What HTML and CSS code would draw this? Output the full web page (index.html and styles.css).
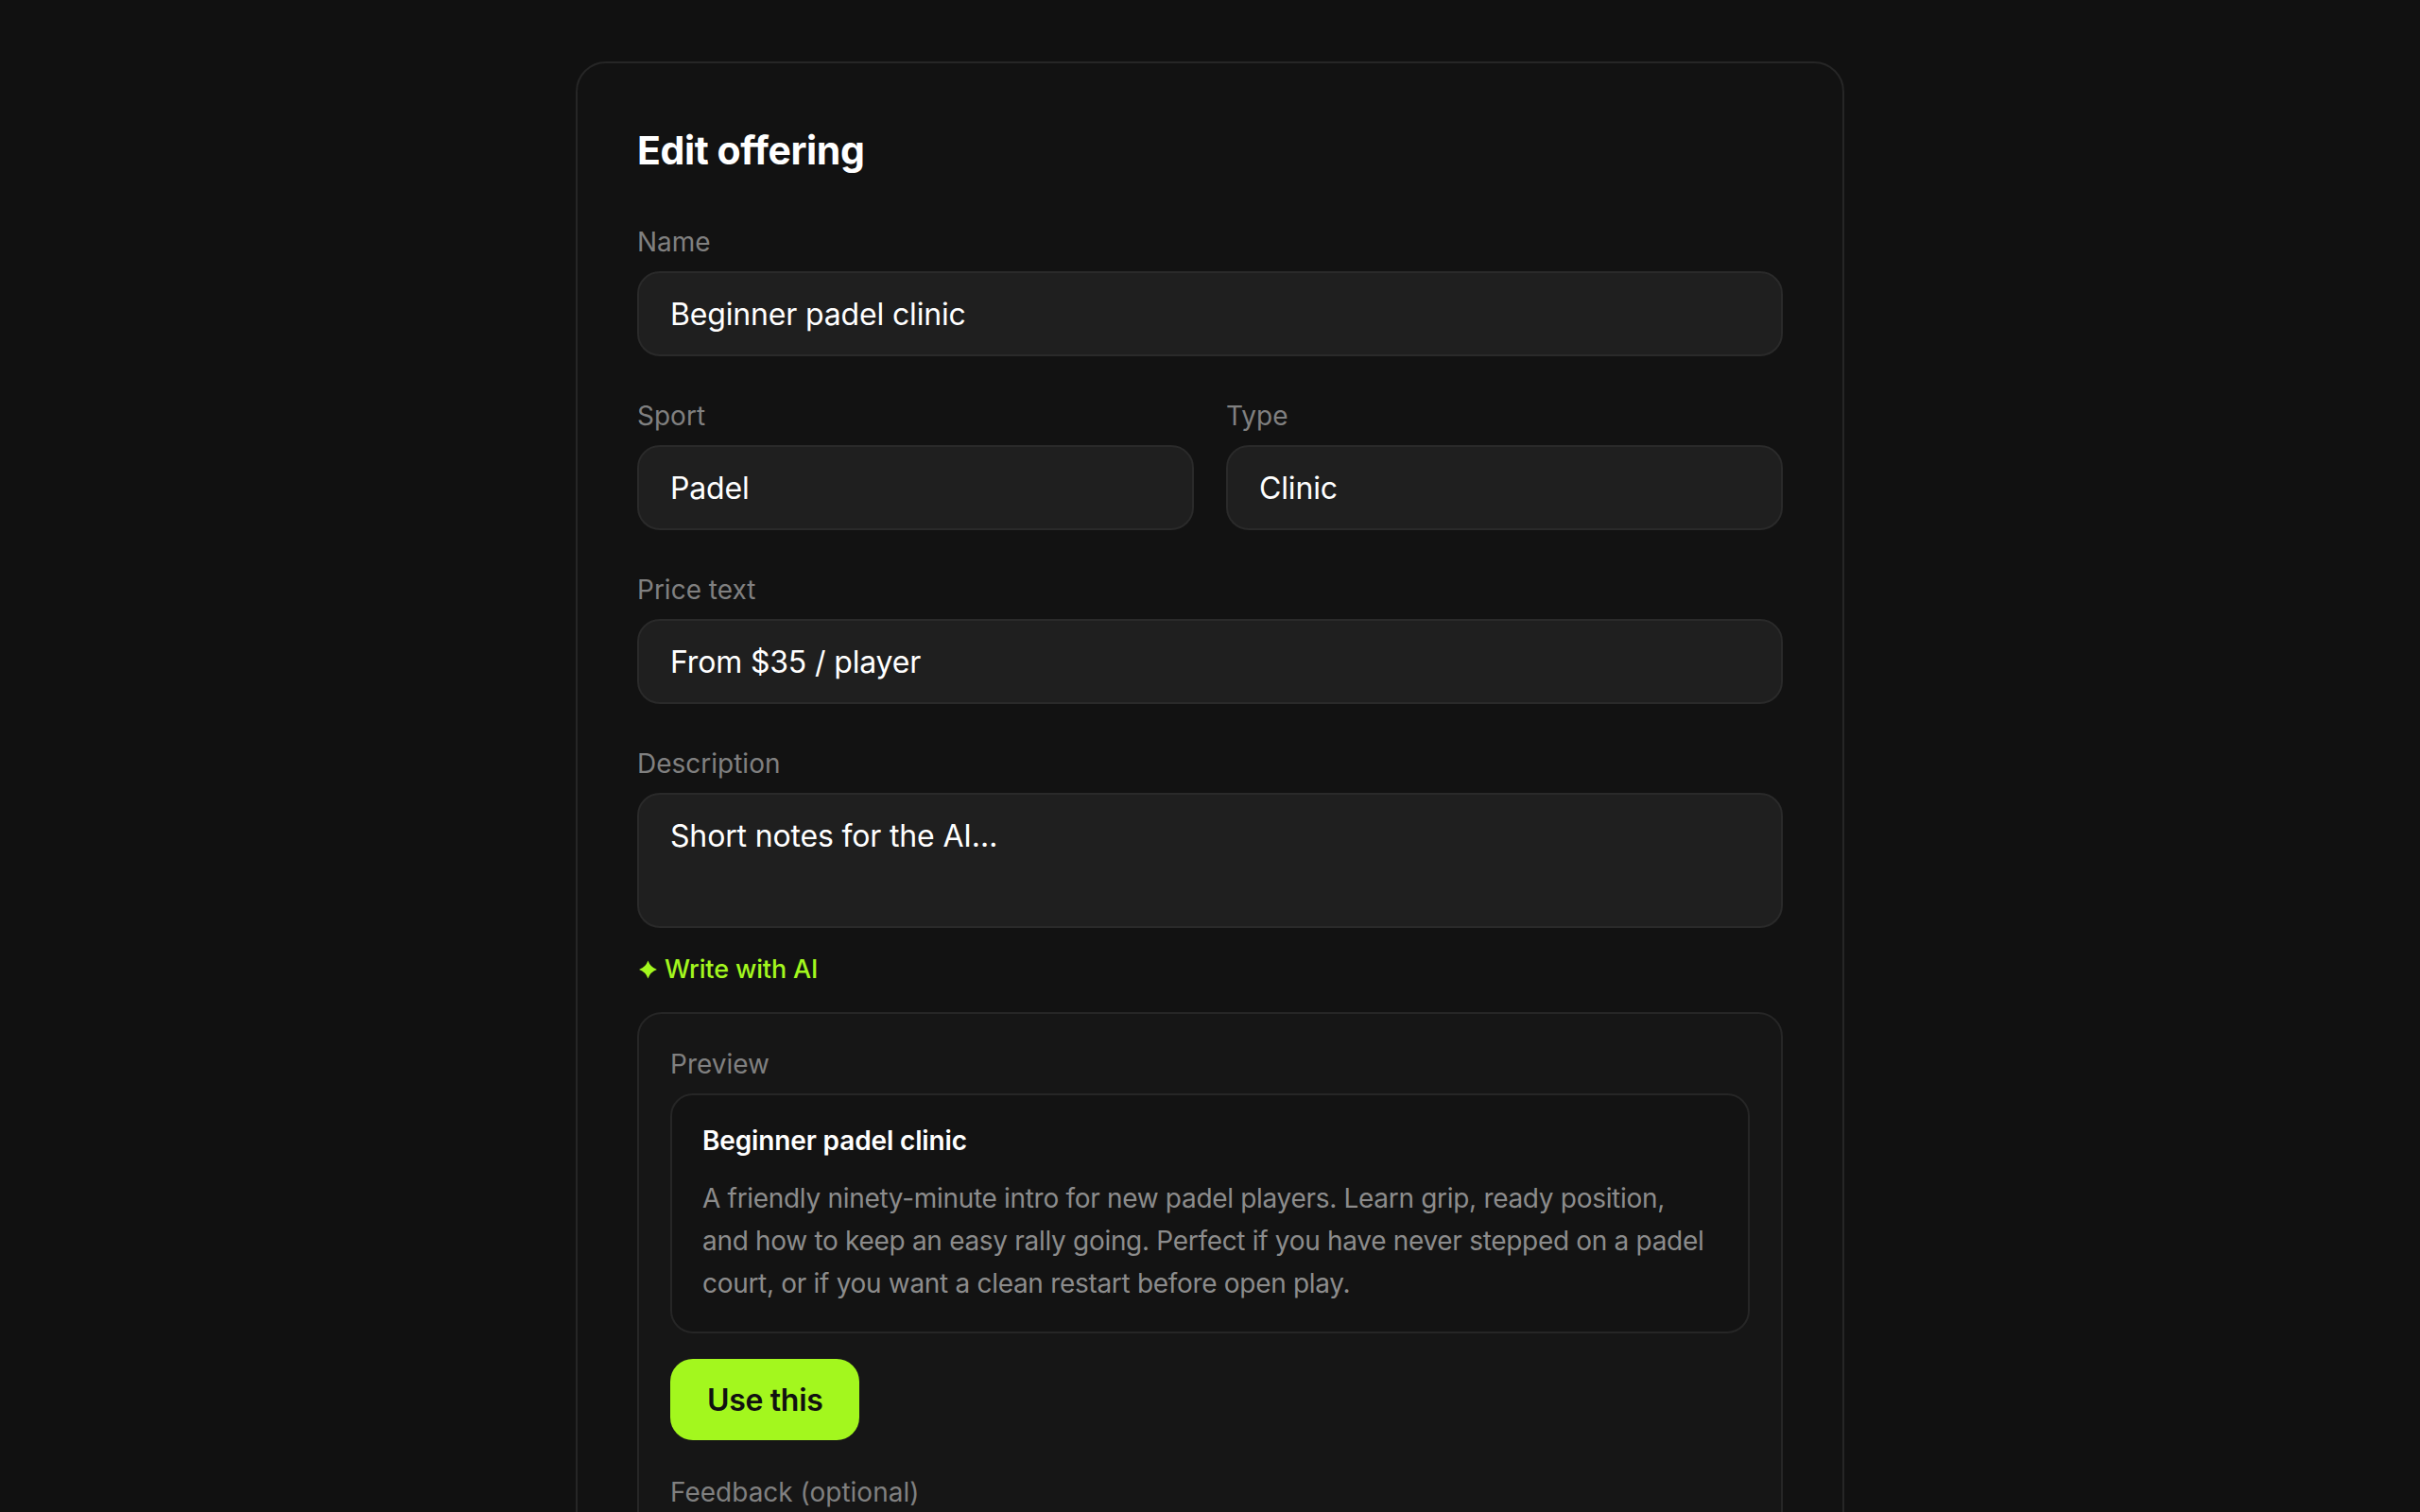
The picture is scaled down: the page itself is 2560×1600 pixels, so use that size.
FILE: index.html
```html
<!DOCTYPE html>
<html lang="en">
<head>
<meta charset="utf-8">
<title>Edit offering</title>
<link rel="stylesheet" href="styles.css">
</head>
<body>
<div class="viewport">
  <main class="card">
    <h1 class="title">Edit offering</h1>

    <div class="field">
      <label class="label" for="name">Name</label>
      <input class="input" id="name" type="text" value="Beginner padel clinic">
    </div>

    <div class="row">
      <div class="field">
        <label class="label" for="sport">Sport</label>
        <input class="input" id="sport" type="text" value="Padel">
      </div>
      <div class="field">
        <label class="label" for="type">Type</label>
        <input class="input" id="type" type="text" value="Clinic">
      </div>
    </div>

    <div class="field">
      <label class="label" for="price">Price text</label>
      <input class="input" id="price" type="text" value="From $35 / player">
    </div>

    <div class="field field-desc">
      <label class="label" for="desc">Description</label>
      <textarea class="input textarea" id="desc">Short notes for the AI…</textarea>
      <a class="ai-link" href="#">
        <svg class="star" viewBox="0 0 20 20" width="19" height="20" aria-hidden="true">
          <path d="M10 0 Q12.6 7.4 20 10 Q12.6 12.6 10 20 Q7.4 12.6 0 10 Q7.4 7.4 10 0 Z" fill="currentColor"/>
        </svg>
        <span>Write with AI</span>
      </a>
    </div>

    <section class="preview">
      <div class="label">Preview</div>
      <div class="preview-card">
        <h2 class="preview-title">Beginner padel clinic</h2>
        <p class="preview-text">A friendly ninety-minute intro for new padel players. Learn grip, ready position,<br>and how to keep an easy rally going. Perfect if you have never stepped on a padel<br>court, or if you want a clean restart before open play.</p>
      </div>
      <button class="btn" type="button">Use this</button>
      <label class="label feedback-label" for="feedback">Feedback (optional)</label>
      <textarea class="input textarea" id="feedback"></textarea>
    </section>
  </main>
</div>
</body>
</html>
```
FILE: styles.css
```css
* { box-sizing: border-box; }

html, body {
  margin: 0;
  height: 100%;
}

body {
  background: #111111;
  color: #ffffff;
  font-family: Inter, "Noto Sans", "Liberation Sans", sans-serif;
}

.viewport {
  height: 100vh;
  overflow-y: auto;
  padding-top: 65px;
  scrollbar-width: none;
}

.viewport::-webkit-scrollbar { display: none; }

.card {
  width: 1342px;
  margin: 0 auto 65px;
  background: #121212;
  border: 2px solid #262626;
  border-radius: 32px;
  padding: 68px 63px 64px;
}

.title {
  margin: 0 0 55px;
  font-size: 41px;
  line-height: 48px;
  font-weight: 700;
  letter-spacing: -0.01em;
  color: #ffffff;
}

.field {
  display: flex;
  flex-direction: column;
  margin-bottom: 45px;
}

.label {
  display: block;
  font-size: 28px;
  line-height: 36px;
  color: #808080;
  margin-bottom: 13px;
}

.input {
  width: 100%;
  height: 90px;
  padding: 0 33px;
  background: #1f1f1f;
  border: 2px solid #2a2a2a;
  border-radius: 24px;
  color: #ffffff;
  font-family: inherit;
  font-size: 32px;
  line-height: 40px;
  letter-spacing: -0.005em;
  outline: none;
}

.textarea {
  height: 143px;
  padding: 24px 33px;
  resize: none;
  display: block;
}

.row {
  display: grid;
  grid-template-columns: 1fr 1fr;
  column-gap: 34px;
}

.field-desc { margin-bottom: 27px; }

.ai-link {
  display: flex;
  align-items: center;
  gap: 8px;
  margin-top: 26px;
  color: #a3f71e;
  text-decoration: none;
  font-size: 27px;
  line-height: 36px;
  font-weight: 500;
  letter-spacing: -0.005em;
}

.star { flex: none; margin-left: 2px; }

.preview {
  background: #161616;
  border: 2px solid #262626;
  border-radius: 26px;
  padding: 35px 33px 40px;
}

.preview-card {
  background: #131313;
  border: 2px solid #262626;
  border-radius: 24px;
  padding: 30px 32px 28px;
}

.preview-title {
  margin: 0;
  font-size: 28px;
  line-height: 36px;
  font-weight: 600;
  letter-spacing: -0.005em;
  color: #ffffff;
}

.preview-text {
  margin: 21px 0 0;
  font-size: 28px;
  line-height: 45px;
  color: #8c8c8c;
  letter-spacing: -0.011em;
  white-space: nowrap;
}

.btn {
  display: inline-flex;
  align-items: center;
  justify-content: center;
  height: 86px;
  margin-top: 27px;
  padding: 0 39px;
  background: #a3f71e;
  color: #111111;
  border: none;
  border-radius: 24px;
  font-family: inherit;
  font-size: 32px;
  font-weight: 600;
  letter-spacing: -0.01em;
  cursor: pointer;
}

.feedback-label { margin-top: 37px; }
```
